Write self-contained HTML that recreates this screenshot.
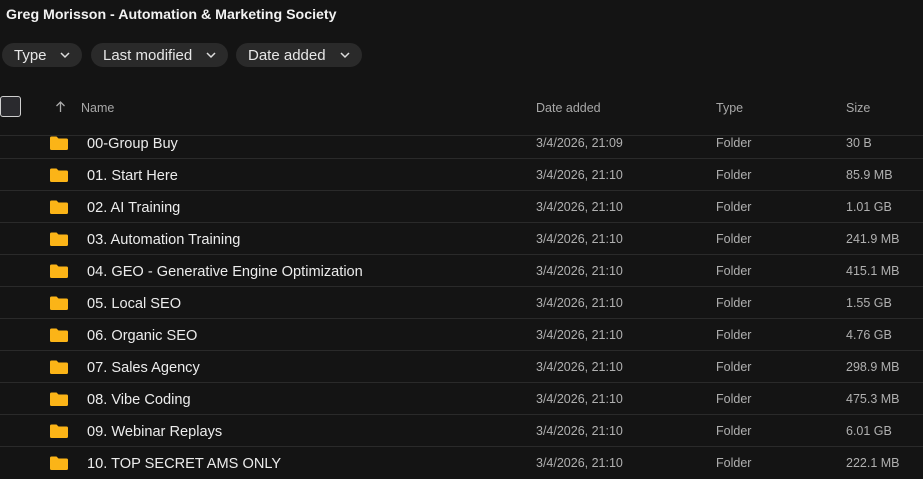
<!DOCTYPE html><html><head><style>
body{margin:0;width:923px;height:477px;background:#141414;font-family:"Liberation Sans",sans-serif;color:#e8e8e8;overflow:hidden;position:relative}
.t{position:absolute;left:6px;top:7px;font-size:14.2px;font-weight:bold;color:#f2f2f2}
.pill{position:absolute;top:43px;height:24px;border-radius:12px;background:#2a2a2a;font-size:15px;line-height:26px;color:#e6e6e6;padding-left:12px;box-sizing:border-box}
.pill svg{position:absolute;right:12px;top:9px}
.h{position:absolute;top:101px;font-size:12.5px;color:#a8a8a8}
.cb{position:absolute;left:0;top:96px;width:19px;height:19px;border:1.5px solid #cfcfcf;border-radius:3px;background:#2a2a2e}
.row{position:absolute;left:0;width:923px;height:32px;border-top:1px solid #2a2a2a}
.row .f{position:absolute;left:50px;top:9px;width:18px;height:14px}
.row .n{position:absolute;left:87px;top:9px;font-size:14.6px;color:#ececec}
.row .c{position:absolute;top:9px;font-size:12.5px;color:#b0b0b0}
.hl{position:absolute;left:0;top:135px;width:923px;height:1px;background:#2a2a2a}
</style></head><body>
<div class="t">Greg Morisson - Automation &amp; Marketing Society</div>
<div class="pill" style="left:2px;width:80px">Type<svg width="10" height="7"><path d="M1 1l4 4 4-4" stroke="#ddd" stroke-width="1.5" fill="none"/></svg></div>
<div class="pill" style="left:91px;width:137px">Last modified<svg width="10" height="7"><path d="M1 1l4 4 4-4" stroke="#ddd" stroke-width="1.5" fill="none"/></svg></div>
<div class="pill" style="left:236px;width:126px">Date added<svg width="10" height="7"><path d="M1 1l4 4 4-4" stroke="#ddd" stroke-width="1.5" fill="none"/></svg></div>
<div class="cb"></div>
<svg style="position:absolute;left:55px;top:101px" width="11" height="12"><path d="M5.5 11V1.5M1.5 5l4-4 4 4" stroke="#aaa" stroke-width="1.3" fill="none"/></svg>
<div class="h" style="left:81px">Name</div>
<div class="h" style="left:536px">Date added</div>
<div class="h" style="left:716px">Type</div>
<div class="h" style="left:846px">Size</div>
<div id="rows"></div>
<div class="hl"></div>
<script>
var d=[["00-Group Buy","21:09","30 B"],["01. Start Here","21:10","85.9 MB"],["02. AI Training","21:10","1.01 GB"],["03. Automation Training","21:10","241.9 MB"],["04. GEO - Generative Engine Optimization","21:10","415.1 MB"],["05. Local SEO","21:10","1.55 GB"],["06. Organic SEO","21:10","4.76 GB"],["07. Sales Agency","21:10","298.9 MB"],["08. Vibe Coding","21:10","475.3 MB"],["09. Webinar Replays","21:10","6.01 GB"],["10. TOP SECRET AMS ONLY","21:10","222.1 MB"]];
var h="";d.forEach(function(r,i){var top=126+i*32;h+='<div class="row" style="top:'+top+'px;'+(i==0?'border-top-color:transparent':'')+'"><svg class="f" viewBox="0 0 18 14"><path d="M0 2a1.5 1.5 0 0 1 1.5-1.5h5l2 2h8A1.5 1.5 0 0 1 18 4v8.5A1.5 1.5 0 0 1 16.5 14h-15A1.5 1.5 0 0 1 0 12.5z" fill="#fbb417"/></svg><div class="n">'+r[0]+'</div><div class="c" style="left:536px">3/4/2026, '+r[1]+'</div><div class="c" style="left:716px">Folder</div><div class="c" style="left:846px">'+r[2]+'</div></div>'});
document.getElementById("rows").innerHTML=h;
</script>
</body></html>
